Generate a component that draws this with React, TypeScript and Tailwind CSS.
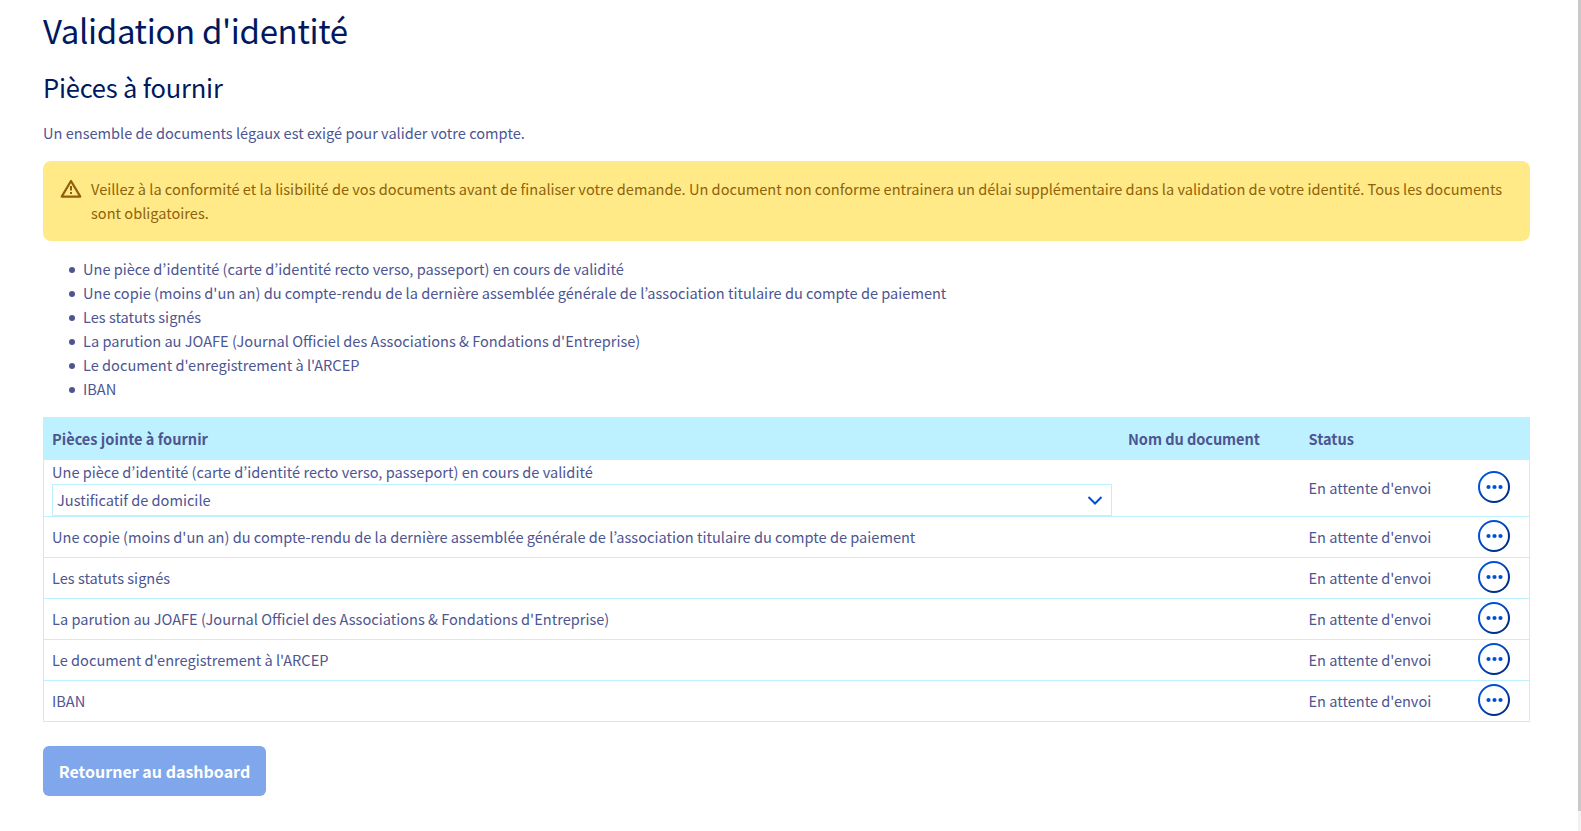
import React from "react";

const docs = [
  "Une pièce d’identité (carte d’identité recto verso, passeport) en cours de validité",
  "Une copie (moins d'un an) du compte-rendu de la dernière assemblée générale de l’association titulaire du compte de paiement",
  "Les statuts signés",
  "La parution au JOAFE (Journal Officiel des Associations & Fondations d'Entreprise)",
  "Le document d'enregistrement à l'ARCEP",
  "IBAN",
];

function MoreButton() {
  return (
    <button className="block h-8 w-8" aria-label="Actions">
      <svg width="32" height="32" viewBox="0 0 32 32" fill="none">
        <defs>
          <linearGradient id="ring" x1="0" y1="0" x2="1" y2="1">
            <stop offset="0.3" stopColor="#0050d7" />
            <stop offset="0.75" stopColor="#00308a" />
          </linearGradient>
        </defs>
        <circle cx="16" cy="16" r="15" stroke="url(#ring)" strokeWidth="2" />
        <circle cx="10.5" cy="16" r="2.1" fill="#0050d7" />
        <circle cx="16.5" cy="16" r="2.1" fill="#0050d7" />
        <circle cx="22.5" cy="16" r="2.1" fill="#0050d7" />
      </svg>
    </button>
  );
}

export default function App() {
  return (
    <div className="flex h-[831px] w-full overflow-hidden bg-white font-['Noto_Sans_CJK_KR',sans-serif] text-[14.585px] leading-6 text-[#4d5592]">
      <main className="flex-1 pl-[43px] pr-12">
        <h1 className="pt-2 text-[33px] leading-[45px] tracking-[-0.35px] text-[#00185e]">
          Validation d'identité
        </h1>
        <h2 className="mt-[18px] text-[25.5px] leading-8 tracking-[-0.2px] text-[#00185e]">
          Pièces à fournir
        </h2>
        <p className="mt-[18px]">
          Un ensemble de documents légaux est exigé pour valider votre compte.
        </p>
        <div className="mt-4 flex h-20 rounded-lg bg-[#ffea87] pl-[17px] pt-4 text-[#8f620b]">
          <svg className="mt-0.5 mr-[9px] shrink-0" width="22" height="20" viewBox="0 0 22 20" fill="none" stroke="#8f5f0b" strokeWidth="2.2" strokeLinejoin="round">
            <path d="M11 2 L20.3 17.6 H1.7 Z" />
            <path d="M11 7 V11.5" strokeWidth="2" />
            <path d="M11 13 V15" strokeWidth="2" />
          </svg>
          <p>
            Veillez à la conformité et la lisibilité de vos documents avant de finaliser votre demande. Un document non conforme entrainera un délai supplémentaire dans la validation de votre identité. Tous les documents
            <br />
            sont obligatoires.
          </p>
        </div>
        <ul className="mt-4 pl-[26px]">
          {docs.map((d) => (
            <li key={d} className="flex items-center">
              <span className="mt-0.5 mr-2 h-1.5 w-1.5 rounded-full bg-[#4d5592]" />
              <span>{d}</span>
            </li>
          ))}
        </ul>
        <section className="mt-4 border border-[#bef1ff]">
          <div className="grid h-[42px] grid-cols-[1076px_180.5px_169.5px_1fr] items-center bg-[#bef1ff] pl-2 font-bold">
            <div>Pièces jointe à fournir</div>
            <div className="tracking-[-0.07px]">Nom du document</div>
            <div>Status</div>
          </div>
          {docs.map((d, i) => (
            <div
              key={d}
              className={
                "grid grid-cols-[1256.5px_169.5px_1fr] items-center border-[#bef1ff] pl-2 " +
                (i === 0 ? "h-14" : "h-[41px] border-t")
              }
            >
              {i === 0 ? (
                <div>
                  <div>{d}</div>
                  <button className="flex h-8 w-[1060px] items-center justify-between border border-[#bef1ff] pl-1 pr-2 text-left">
                    <span>Justificatif de domicile</span>
                    <svg width="16" height="10" viewBox="0 0 16 10" fill="none" stroke="#0050d7" strokeWidth="2">
                      <path d="M1.5 2 L8 8.5 L14.5 2" />
                    </svg>
                  </button>
                </div>
              ) : (
                <div>{d}</div>
              )}
              <div>En attente d'envoi</div>
              <div className="-mt-0.5">
                <MoreButton />
              </div>
            </div>
          ))}
        </section>
        <button className="mt-6 h-[50px] w-[223px] rounded-md bg-[#80a7eb] text-[16px] font-bold text-white">
          Retourner au dashboard
        </button>
      </main>
      <div className="h-full w-[3px] bg-[#f1f1f1]">
        <div className="h-[811px] bg-[#c9c9c9]" />
      </div>
    </div>
  );
}
